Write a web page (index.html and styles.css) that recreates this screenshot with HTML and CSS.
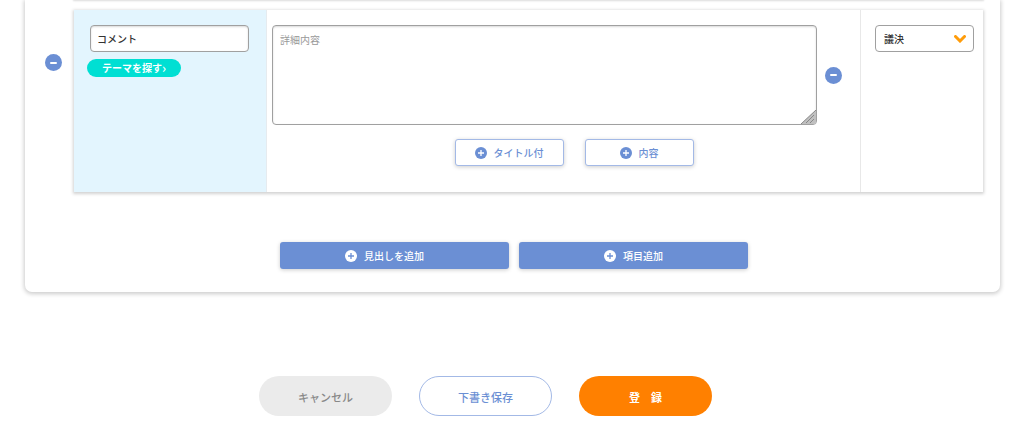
FILE: index.html
```
<!DOCTYPE html>
<html lang="ja">
<head>
    <meta charset="UTF-8">
    <meta name="viewport" content="width=device-width, initial-scale=1.0">
    <title>項目の編集</title>
    <link rel="stylesheet" href="styles.css">
</head>
<body>

    <form class="page">
        <div class="panel">
            <div class="card card-prev"></div>

            <div class="item">
                <button type="button" class="remove" aria-label="項目を削除"></button>
                <div class="card">
                    <div class="col-title">
                        <input type="text" class="field" aria-label="タイトル" value="コメント">
                        <button type="button" class="theme">テーマを探す<span class="more">›</span></button>
                    </div>
                    <div class="col-detail">
                        <div class="detail">
                            <div class="detail-box">
                                <textarea class="field" aria-label="詳細内容" placeholder="詳細内容"></textarea>
                                <svg class="grip" viewBox="0 0 15 14" aria-hidden="true">
                                    <path d="M0 14L15 0V12Q15 14 13 14Z" fill="#c0c0c0"/>
                                    <path d="M0 14L15 0M5 13L13 5M9 13L13 9" stroke="#888" fill="none"/>
                                </svg>
                            </div>
                            <button type="button" class="remove" aria-label="内容を削除"></button>
                        </div>
                        <div class="detail-actions">
                            <button type="button" class="btn btn-outline">
                                <svg class="plus" viewBox="0 0 12 12" aria-hidden="true"><circle cx="6" cy="6" r="6" fill="#6b8fd4"/><path d="M6 3v6M3 6h6" stroke="#fff" stroke-width="1.3"/></svg>
                                タイトル付
                            </button>
                            <button type="button" class="btn btn-outline">
                                <svg class="plus" viewBox="0 0 12 12" aria-hidden="true"><circle cx="6" cy="6" r="6" fill="#6b8fd4"/><path d="M6 3v6M3 6h6" stroke="#fff" stroke-width="1.3"/></svg>
                                内容
                            </button>
                        </div>
                    </div>
                    <div class="col-type">
                        <div class="select-box">
                            <select class="field" aria-label="種別">
                                <option>議決</option>
                            </select>
                            <svg class="arrow" viewBox="0 0 12 8" aria-hidden="true"><path d="M1.5 1.5L6 6L10.5 1.5" fill="none" stroke="#ff9c0a" stroke-width="3" stroke-linecap="round"/></svg>
                        </div>
                    </div>
                </div>
            </div>

            <div class="panel-actions">
                <button type="button" class="btn btn-fill btn-heading">
                    <svg class="plus" viewBox="0 0 12 12" aria-hidden="true"><circle cx="6" cy="6" r="6" fill="#fff"/><path d="M6 3v6M3 6h6" stroke="#6b8fd4" stroke-width="1.3"/></svg>
                    見出しを追加
                </button>
                <button type="button" class="btn btn-fill">
                    <svg class="plus" viewBox="0 0 12 12" aria-hidden="true"><circle cx="6" cy="6" r="6" fill="#fff"/><path d="M6 3v6M3 6h6" stroke="#6b8fd4" stroke-width="1.3"/></svg>
                    項目追加
                </button>
            </div>
        </div>

        <div class="form-actions">
            <button type="button" class="round cancel">キャンセル</button>
            <button type="button" class="round draft">下書き保存</button>
            <button type="submit" class="round submit">登　録</button>
        </div>
    </form>

</body>
</html>
```
FILE: styles.css
```
* {
    box-sizing: border-box;
}
body {
    margin: 0;
    background-color: #fff;
    color: #333;
    font-family: "Noto Sans CJK JP", sans-serif;
    font-size: 10px;
    line-height: 16px;
}
button, input, select, textarea {
    margin: 0;
    font-family: inherit;
    font-size: inherit;
    line-height: inherit;
    color: inherit;
}
button {
    padding: 0;
    border: none;
    cursor: pointer;
}
.page {
    padding: 0 24px 24px 25px;
}
.panel {
    padding: 0 17px 23px 20px;
    border-radius: 0 0 7px 7px;
    box-shadow: 0 1px 4px 1px rgba(0, 0, 0, 0.2);
}
.item {
    display: flex;
    align-items: flex-start;
    gap: 12px;
}
.item > .remove {
    margin-top: 44px;
}
.card {
    flex: 1;
    display: flex;
    min-height: 182px;
    background-color: #fff;
    box-shadow: 0 1px 3px 1px rgba(0, 0, 0, 0.18);
}
.card-prev {
    min-height: 0;
    margin: 0 0 10px 29px;
    box-shadow: 0 0 2px 1px rgba(0, 0, 0, 0.15);
}
.remove {
    flex: none;
    display: flex;
    align-items: center;
    justify-content: center;
    width: 17px;
    height: 17px;
    border-radius: 50%;
    background-color: #6b8fd4;
}
.remove::before {
    content: "";
    width: 7px;
    height: 2px;
    border-radius: 1px;
    background-color: #fff;
}
.col-title {
    width: 193px;
    padding: 15px 17px 0 16px;
    background-color: #e3f5fe;
    border-right: 1px solid #e6ebef;
}
.col-detail {
    flex: 1;
    padding: 15px 18px 0 5px;
}
.col-type {
    width: 123px;
    padding: 15px 9px 0 14px;
    border-left: 1px solid #e8e8e8;
}
.field {
    display: block;
    width: 100%;
    height: 27px;
    padding: 0 6px;
    border: 1px solid #a0a0a0;
    border-radius: 4px;
    background-color: #fff;
}
input.field {
    font-weight: 500;
    box-shadow: inset 0 1px 2px rgba(0, 0, 0, 0.15);
}
.theme {
    display: flex;
    align-items: center;
    justify-content: center;
    width: 94px;
    height: 18px;
    margin: 7px 0 0 -3px;
    border-radius: 9px;
    background-color: #00dfd3;
    color: #fff;
    font-weight: bold;
}
.more {
    font-size: 13px;
    font-weight: 500;
}
.detail {
    display: flex;
    align-items: center;
    gap: 8px;
}
.detail-box {
    position: relative;
    flex: 1;
}
textarea.field {
    height: 100px;
    padding: 6px 7px;
    resize: none;
    box-shadow: inset 0 1px 2px rgba(0, 0, 0, 0.15);
}
textarea::placeholder {
    color: #999;
}
.grip {
    position: absolute;
    right: 1px;
    bottom: 1px;
    width: 15px;
    height: 14px;
}
.detail-actions {
    display: flex;
    justify-content: center;
    gap: 21px;
    margin: 14px 0 0 34px;
}
.btn {
    display: flex;
    align-items: center;
    justify-content: center;
    gap: 7px;
    height: 27px;
    border-radius: 3px;
    font-weight: 500;
    box-shadow: 0 1px 4px rgba(0, 0, 0, 0.2);
}
.btn-outline {
    width: 109px;
    border: 1px solid #a3b9e6;
    background-color: #fff;
    color: #6b8fd4;
}
.btn-fill {
    width: 229px;
    background-color: #6b8fd4;
    color: #fff;
}
.btn-heading {
    padding-right: 20px;
}
.plus {
    width: 12px;
    height: 12px;
}
.select-box {
    position: relative;
}
select.field {
    padding: 0 8px;
    appearance: none;
    font-weight: 500;
}
.arrow {
    position: absolute;
    top: 10px;
    right: 8px;
    width: 12px;
    height: 8px;
    pointer-events: none;
}
.panel-actions {
    display: flex;
    justify-content: center;
    gap: 10px;
    margin-top: 50px;
}
.form-actions {
    display: flex;
    justify-content: center;
    gap: 27px;
    margin: 84px 54px 0 0;
}
.round {
    width: 133px;
    height: 40px;
    padding-top: 2px;
    border-radius: 20px;
    font-size: 11px;
    font-weight: 500;
}
.cancel {
    background-color: #ebebeb;
    color: #888;
}
.draft {
    border: 1px solid #a3b9e6;
    background-color: #fff;
    color: #6b8fd4;
}
.submit {
    background-color: #ff8000;
    color: #fff;
    font-weight: bold;
}
```
